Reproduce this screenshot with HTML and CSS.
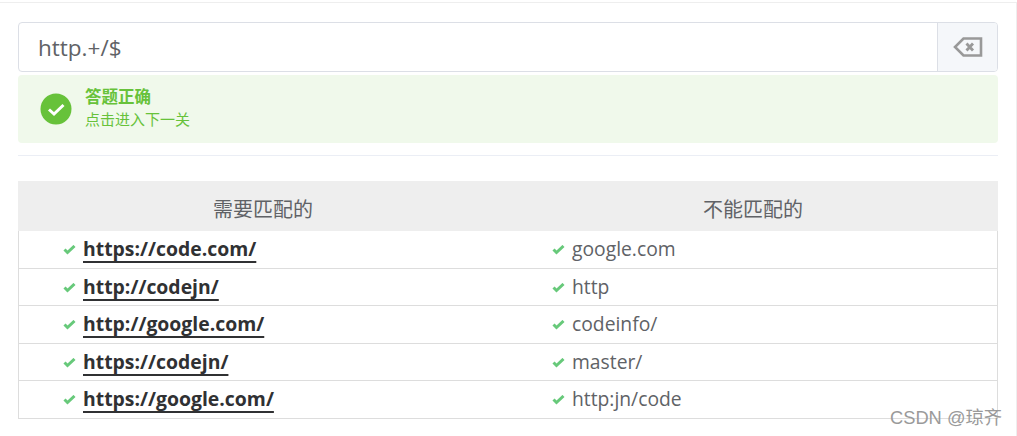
FILE: index.html
```html
<!DOCTYPE html>
<html lang="zh">
<head>
<meta charset="utf-8">
<title>Regex</title>
<link rel="stylesheet" href="styles.css">
</head>
<body>
<svg class="sprite" width="0" height="0" aria-hidden="true"><symbol id="tick" viewBox="0 0 13 10"><path d="M1.500 4.500l3 3L11.500 1" fill="none" stroke="currentColor" stroke-width="3"/></symbol></svg>
<main class="frame">
  <div class="input-group">
    <div class="input">http.+/$</div>
    <button class="clear" aria-label="clear">
      <svg width="30" height="20" viewBox="0 0 30 20"><path d="M10.500 1.500H28V18.500H10.500L2 10Z" fill="none" stroke="#999" stroke-width="2.600"/><path d="M13.500 6.500l6.500 7M20 6.500l-6.500 7" fill="none" stroke="#999" stroke-width="2.800"/></svg>
    </button>
  </div>
  <div class="alert">
    <svg class="alert-icon" width="32" height="32" viewBox="0 0 32 32"><circle cx="16" cy="16" r="15.500" fill="#67c23a"/><path d="M9 16.500l5 4.500 9.500-9" fill="none" stroke="#fff" stroke-width="3"/></svg>
    <div class="alert-text">
      <div class="alert-title">答题正确</div>
      <div class="alert-sub">点击进入下一关</div>
    </div>
  </div>
  <hr class="rule">
  <table class="cases">
    <thead>
      <tr><th>需要匹配的</th><th>不能匹配的</th></tr>
    </thead>
    <tbody>
      <tr><td class="yes"><svg class="tick"><use href="#tick"/></svg><b>https://code.com/</b></td><td class="no"><svg class="tick"><use href="#tick"/></svg>google.com</td></tr>
      <tr><td class="yes"><svg class="tick"><use href="#tick"/></svg><b>http://codejn/</b></td><td class="no"><svg class="tick"><use href="#tick"/></svg>http</td></tr>
      <tr><td class="yes"><svg class="tick"><use href="#tick"/></svg><b>http://google.com/</b></td><td class="no"><svg class="tick"><use href="#tick"/></svg>codeinfo/</td></tr>
      <tr><td class="yes"><svg class="tick"><use href="#tick"/></svg><b>https://codejn/</b></td><td class="no"><svg class="tick"><use href="#tick"/></svg>master/</td></tr>
      <tr><td class="yes"><svg class="tick"><use href="#tick"/></svg><b>https://google.com/</b></td><td class="no"><svg class="tick"><use href="#tick"/></svg>http:jn/code</td></tr>
    </tbody>
  </table>
</main>
<div class="watermark">CSDN @琼齐</div>
</body>
</html>
```
FILE: styles.css
```css
* { box-sizing: border-box; }
html, body { margin: 0; height: 436px; overflow: hidden; background: #fff; }
body {
  position: relative;
  font-family: "Open Sans", "Noto Sans CJK SC", sans-serif;
  color: #606266;
}
.sprite { position: absolute; }
.frame {
  width: 1017px;
  height: 436px;
  margin-top: 2px;
  padding: 19px 18px 0 18px;
  border-top: 1px solid #eee;
  border-right: 1px solid #eee;
}
.input-group {
  display: flex;
  height: 50px;
  border: 1px solid #dcdfe6;
  border-radius: 4px;
  overflow: hidden;
}
.input {
  flex: 1;
  padding-left: 19px;
  font-size: 22.500px;
  line-height: 50px;
  color: #606266;
}
.clear {
  width: 60px;
  padding: 0;
  border: 0;
  border-left: 1px solid #dcdfe6;
  background: #f5f7fa;
  display: flex;
  align-items: center;
  justify-content: center;
}
.alert {
  display: flex;
  align-items: center;
  height: 68px;
  margin-top: 3px;
  padding-left: 22px;
  background: #f0f9eb;
  border-radius: 4px;
  color: #67c23a;
}
.alert-text { margin-left: 13px; margin-top: -5px; }
.alert-title { font-size: 16.500px; line-height: 24px; font-weight: 700; }
.alert-sub { font-size: 15px; line-height: 20px; }
.rule {
  height: 1px;
  margin: 12px 0 25px;
  border: 0;
  background: #ebeef5;
}
.cases {
  width: 980px;
  table-layout: fixed;
  border-collapse: separate;
  border-spacing: 0;
}
.cases th {
  height: 50px;
  padding: 4px 0 0;
  background: #eee;
  font-size: 20px;
  font-weight: 400;
  text-align: center;
  color: #606266;
}
.cases td {
  height: 37.500px;
  padding: 0 0 1px;
  font-size: 19.300px;
  white-space: nowrap;
  border-bottom: 1px solid #ddd;
}
.cases td.yes { padding-left: 44px; border-left: 1px solid #ddd; }
.cases td.no { padding-left: 44px; border-right: 1px solid #ddd; }
.cases b {
  font-weight: 700;
  font-size: 19.400px;
  color: #303133;
  text-decoration: underline 2px #303133;
  text-decoration-skip-ink: none;
  text-underline-offset: 5px;
}
.tick {
  width: 13px;
  height: 10px;
  margin-right: 7px;
  color: #67c97a;
  vertical-align: 1px;
}
.watermark {
  position: absolute;
  left: 890px;
  top: 406px;
  font-family: "Liberation Sans", "Noto Sans CJK SC", sans-serif;
  font-size: 18.300px;
  line-height: 24px;
  color: #9a9a9a;
}
```
